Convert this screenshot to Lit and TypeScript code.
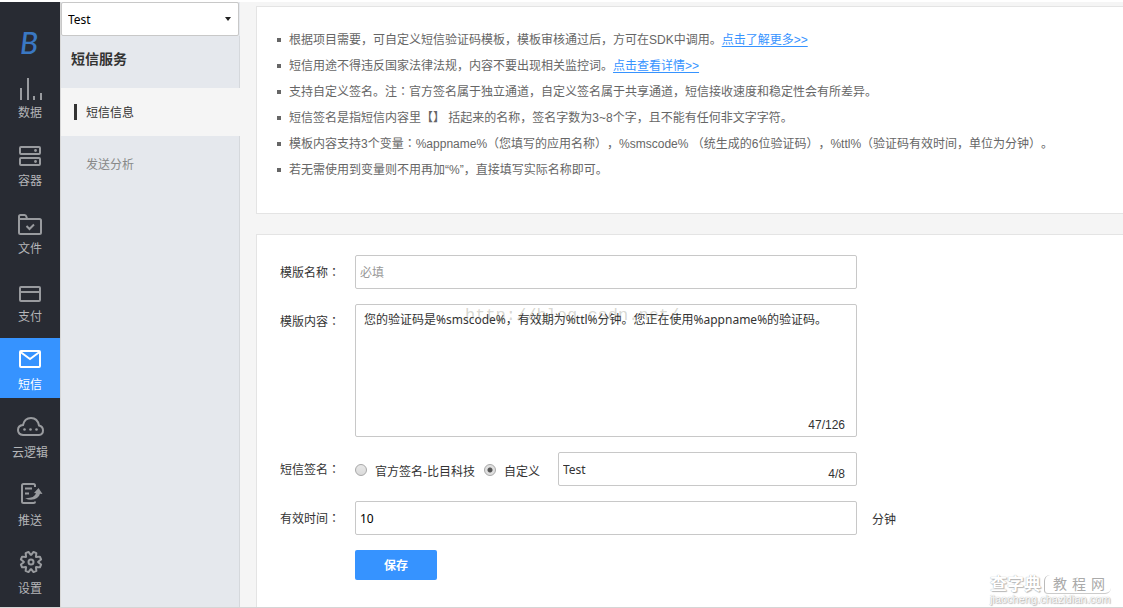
import { LitElement, html, svg, css, TemplateResult } from "lit";
import { customElement, property, state } from "lit/decorators.js";
import { classMap } from "lit/directives/class-map.js";

// Sets full-width colons in the face that centres them in their cell.
const centred = css`
  .mid {
    font-family: "Noto Sans CJK TC", sans-serif;
    line-height: 1;
  }
`;
const punctuate = (text: string) =>
  text.split(/(：)/).map((part) => (part === "：" ? html`<span class="mid">${part}</span>` : part));

const gearPath = (() => {
  const teeth = 8;
  const cx = 31;
  const cy = 20;
  const points: string[] = [];
  for (let i = 0; i < teeth; i++) {
    const mid = (i / teeth) * Math.PI * 2 - Math.PI / 2 + Math.PI / 8;
    const at = (offset: number, r: number) =>
      `${(cx + Math.cos(mid + offset) * r).toFixed(2)} ${(cy + Math.sin(mid + offset) * r).toFixed(2)}`;
    points.push(at(-0.36, 7.2), at(-0.15, 10.4), at(0.15, 10.4), at(0.36, 7.2));
  }
  return `M${points.join("L")}Z`;
})();

const icons: Record<string, TemplateResult> = {
  data: svg`<g fill="currentColor" stroke="none">
    <rect x="20" y="22" width="2" height="12"/><rect x="27" y="12" width="2" height="22"/>
    <rect x="33" y="30" width="2" height="4"/><rect x="40" y="27" width="2" height="7"/></g>`,
  container: svg`<rect x="20" y="13" width="20" height="7" rx="1"/><rect x="20" y="24" width="20" height="7" rx="1"/>
    <g fill="currentColor" stroke="none"><circle cx="35.5" cy="16.5" r="1.4"/><circle cx="35.5" cy="27.5" r="1.4"/></g>`,
  file: svg`<path d="M19 17V14.5Q19 13 20.5 13H24.5Q26 13 26.5 15L27 17H39.500Q41 17 41 18.500V30.500Q41 32 39.500 32H20.500Q19 32 19 30.500V17H27"/>
    <path d="M26.500 24L29.500 27L34 22.500"/>`,
  pay: svg`<rect x="20" y="17" width="20" height="14" rx="1"/><path d="M20 22H40"/>`,
  sms: svg`<rect x="20" y="13" width="20" height="16" rx="1"/><path d="M20.500 14L30 21L39.500 14"/>`,
  cloud: svg`<path d="M23 29Q18 28.500 18 24Q18 19.500 23 19Q24.500 12 31 12Q37.500 12 39 19.500Q43 20.500 43 24.500Q43 28.500 39 29Z"/>
    <g fill="currentColor" stroke="none"><circle cx="24.500" cy="23.500" r="1.300"/><circle cx="30.500" cy="23.500" r="1.300"/><circle cx="36.500" cy="23.500" r="1.300"/></g>`,
  push: svg`<path d="M35 13V11.500Q35 10 33.500 10H23.500Q22 10 22 11.500V27.500Q22 29 23.500 29H33.500Q35 29 35 27.500"/>
    <path d="M25 14.500H32M25 19.500H29"/>
    <path fill="currentColor" stroke="none" d="M38.500 14L42.500 20L40 19.800Q38.500 25.500 31 25.800Q28 25.700 25 24.200Q34.500 24.500 36 19.300L34 19Z"/>`,
  settings: svg`<path stroke-linejoin="round" d=${gearPath}/><circle cx="31" cy="20" r="2.500"/>`,
};

const navItems = [
  { icon: "data", label: "数据" },
  { icon: "container", label: "容器" },
  { icon: "file", label: "文件" },
  { icon: "pay", label: "支付" },
  { icon: "sms", label: "短信" },
  { icon: "cloud", label: "云逻辑" },
  { icon: "push", label: "推送" },
  { icon: "settings", label: "设置" },
];

@customElement("nav-rail")
export class NavRail extends LitElement {
  @property() active = "sms";

  static styles = css`
    :host {
      display: block;
      background: #282b33;
    }
    .logo {
      display: block;
      height: 64px;
      line-height: 80px;
      overflow: hidden;
      text-align: center;
      text-indent: -2px;
      font-family: Lato, sans-serif;
      font-size: 30px;
      font-style: italic;
      font-weight: 500;
      color: #3a78c3;
      text-decoration: none;
    }
    .items {
      display: flex;
      flex-direction: column;
      gap: 8px;
    }
    .item {
      display: flex;
      flex-direction: column;
      align-items: center;
      height: 60px;
      color: #999b9f;
      text-decoration: none;
    }
    .item.active {
      background: #3693ff;
      color: #fff;
    }
    .icon {
      width: 60px;
      height: 36px;
      fill: none;
      stroke: currentColor;
      stroke-width: 2;
    }
    .label {
      font-size: 12px;
      line-height: 22px;
      color: #b4b5b8;
    }
    .active .label {
      color: #fff;
    }
  `;

  render() {
    return html`
      <a class="logo" href="#home">B</a>
      <nav class="items">
        ${navItems.map(
          (item) => html`<a href="#${item.icon}" class=${classMap({ item: true, active: item.icon === this.active })}>
            <svg class="icon" viewBox="0 0 60 36" aria-hidden="true">${icons[item.icon]}</svg>
            <span class="label">${item.label}</span>
          </a>`
        )}
      </nav>
    `;
  }
}

@customElement("service-menu")
export class ServiceMenu extends LitElement {
  static styles = css`
    :host {
      display: flex;
      flex-direction: column;
      background: #e5e8ed;
      border-left: 1px solid #d8d8d8;
    }
    .picker {
      position: relative;
      display: block;
    }
    .select {
      display: block;
      box-sizing: border-box;
      width: 178px;
      height: 34px;
      padding: 0 24px 0 6px;
      appearance: none;
      border: 1px solid #c8c8c8;
      border-radius: 2px;
      background: #fff;
      color: #000;
      font: 12px "Noto Sans", "Noto Sans CJK SC", sans-serif;
    }
    .arrow {
      position: absolute;
      right: 9px;
      top: 15px;
      border: 3px solid transparent;
      border-top: 4px solid #222;
      border-bottom: 0;
      pointer-events: none;
    }
    .title {
      margin: 0;
      padding: 13px 10px 19px;
      font-size: 14px;
      line-height: 20px;
      font-weight: 700;
      color: #333;
      border-right: 1px solid #d5d8dc;
    }
    .entry {
      display: flex;
      align-items: center;
      height: 48px;
      padding: 0 13px;
      gap: 9px;
      font-size: 12px;
      color: #888;
      text-decoration: none;
    }
    .entry::before {
      content: "";
      width: 3px;
      height: 16px;
    }
    .text {
      padding-bottom: 2px;
    }
    .entry.current {
      background: #f5f5f5;
      color: #333;
    }
    .current::before {
      background: #333;
    }
    .rest {
      flex: 1;
      padding-top: 4px;
      border-right: 1px solid #d5d8dc;
    }
  `;

  render() {
    return html`
      <div class="picker">
        <select class="select" aria-label="应用">
          <option>Test</option>
        </select>
        <span class="arrow"></span>
      </div>
      <h1 class="title">短信服务</h1>
      <a class="entry current" href="#info"><span class="text">短信信息</span></a>
      <div class="rest"><a class="entry" href="#analysis"><span class="text">发送分析</span></a></div>
    `;
  }
}

@customElement("template-form")
export class TemplateForm extends LitElement {
  @state() content = "您的验证码是%smscode%，有效期为%ttl%分钟。您正在使用%appname%的验证码。";
  @state() signature = "Test";
  @state() contentCount = 47;

  static styles = [
    centred,
    css`
      :host {
        display: block;
        color: #333;
        font-size: 12px;
      }
      .form {
        display: flex;
        flex-direction: column;
        gap: 15px;
      }
      .row {
        display: grid;
        grid-template-columns: 60px minmax(0, 502px) auto;
        column-gap: 15px;
      }
      .label {
        height: 34px;
        line-height: 36px;
        white-space: nowrap;
      }
      .unit {
        height: 34px;
        line-height: 38px;
      }
      .box {
        position: relative;
        flex: 1;
        min-width: 0;
      }
      .input {
        display: block;
        box-sizing: border-box;
        width: 100%;
        height: 34px;
        margin: 0;
        padding: 0 4px;
        border: 1px solid #c8c8c8;
        border-radius: 2px;
        background: #fff;
        color: #000;
        font: 12px/18px "Noto Sans", "Noto Sans CJK SC", sans-serif;
      }
      .input::placeholder {
        color: #999;
      }
      .area {
        height: 133px;
        padding: 6px 8px;
        color: #333;
        resize: none;
        overflow: hidden;
      }
      .signature {
        color: #333;
      }
      .count {
        position: absolute;
        right: 12px;
        bottom: 4px;
        line-height: 16px;
      }
      .choices {
        display: flex;
        align-items: center;
      }
      .choice {
        display: flex;
        align-items: center;
        gap: 8px;
        box-sizing: border-box;
        height: 34px;
        padding-top: 2px;
        margin-right: 9px;
        white-space: nowrap;
      }
      .choice.last {
        margin-right: 18px;
      }
      .radio {
        appearance: none;
        box-sizing: border-box;
        width: 12px;
        height: 12px;
        margin: 0;
        border: 1px solid #a8a8a8;
        border-radius: 50%;
        background: linear-gradient(#e8e8e8, #dadada);
      }
      .radio:checked {
        background: radial-gradient(circle, #555 0 2px, #e0e0e0 3px);
      }
      .actions {
        display: flex;
        padding-left: 75px;
      }
      .save {
        width: 82px;
        height: 30px;
        padding: 0 0 2px;
        border: 0;
        border-radius: 2px;
        background: #3693ff;
        color: #fff;
        font: 700 12px "Noto Sans CJK SC", sans-serif;
      }
      .stamp {
        position: absolute;
        left: 110px;
        top: 2px;
        line-height: 20px;
        font-family: "Liberation Mono", monospace;
        font-size: 17px;
        color: rgba(120, 120, 100, 0.3);
        pointer-events: none;
      }
    `,
  ];

  private onContent(event: Event) {
    this.content = (event.target as HTMLTextAreaElement).value;
    this.contentCount = this.content.length;
  }

  private onSignature(event: Event) {
    this.signature = (event.target as HTMLInputElement).value;
  }

  render() {
    return html`
      <form class="form">
        <div class="row">
          <label class="label" for="name">${punctuate("模版名称：")}</label>
          <input class="input" id="name" placeholder="必填" />
        </div>
        <div class="row">
          <label class="label" for="content">${punctuate("模版内容：")}</label>
          <div class="box">
            <textarea class="input area" id="content" .value=${this.content} @input=${this.onContent}></textarea>
            <span class="stamp">http://blog.csdn.net/</span>
            <span class="count">${this.contentCount}/126</span>
          </div>
        </div>
        <div class="row">
          <label class="label" for="signature">${punctuate("短信签名：")}</label>
          <div class="choices">
            <label class="choice"><input class="radio" type="radio" name="kind" />官方签名-比目科技</label>
            <label class="choice last"><input class="radio" type="radio" name="kind" checked />自定义</label>
            <div class="box">
              <input class="input signature" id="signature" .value=${this.signature} @input=${this.onSignature} />
              <span class="count">${this.signature.length}/8</span>
            </div>
          </div>
        </div>
        <div class="row">
          <label class="label" for="ttl">${punctuate("有效时间：")}</label>
          <input class="input" id="ttl" value="10" />
          <span class="unit">分钟</span>
        </div>
        <div class="actions"><button class="save" type="button">保存</button></div>
      </form>
    `;
  }
}

@customElement("app-root")
export class AppRoot extends LitElement {
  static styles = [
    centred,
    css`
      :host {
        display: block;
        font-family: "Liberation Sans", "Noto Sans CJK SC", sans-serif;
        text-spacing-trim: space-all;
      }
      .page {
        position: relative;
        box-sizing: border-box;
        display: grid;
        grid-template-columns: 60px 180px minmax(0, 1fr);
        min-height: 100vh;
        padding-top: 2px;
        border-bottom: 1px solid #d5d5d5;
        background: #fff;
        overflow: hidden;
      }
      .main {
        display: flex;
        flex-direction: column;
        gap: 20px;
        padding: 4px 0 0 16px;
        background: #f5f5f5;
      }
      .panel {
        border: 1px solid #e4e4e4;
        border-right: 0;
        background: #fff;
      }
      .notes {
        padding: 20px 16px 30px;
      }
      .editor {
        flex: 1;
        padding: 20px 23px 26px;
        border-bottom: 0;
      }
      .list {
        margin: 0;
        padding: 0 0 0 16px;
        list-style: none;
        font-size: 12px;
        line-height: 26px;
        color: #666;
      }
      .note {
        position: relative;
      }
      .note::before {
        content: "";
        position: absolute;
        left: -12px;
        top: 11px;
        width: 4px;
        height: 4px;
        background: #666;
      }
      .link {
        color: #3693ff;
        text-underline-offset: 2px;
      }
      .mark {
        position: absolute;
        right: 12px;
        bottom: 2px;
        display: flex;
        flex-direction: column;
        color: #fff;
        text-shadow: 0 0 1px #999, 1px 1px 1px #bbb;
        font-size: 11px;
        line-height: 11px;
        pointer-events: none;
      }
      .names {
        display: flex;
        align-items: center;
        gap: 3px;
        font-size: 17px;
        line-height: 18px;
        font-weight: 700;
      }
      .tag {
        display: flex;
        gap: 5px;
        padding: 0 6px 0 8px;
        border-left: 1px solid #bbb;
        border-bottom: 1px solid #ccc;
        border-radius: 6px 0 6px 4px;
        font-size: 14px;
        font-weight: 400;
        color: #aaa;
        text-shadow: none;
      }
    `,
  ];

  render() {
    return html`
      <div class="page">
        <nav-rail active="sms"></nav-rail>
        <service-menu></service-menu>
        <main class="main">
          <section class="panel notes">
            <ul class="list">
              <li class="note">根据项目需要，可自定义短信验证码模板，模板审核通过后，方可在SDK中调用。<a class="link" href="#more">点击了解更多&gt;&gt;</a></li>
              <li class="note">短信用途不得违反国家法律法规，内容不要出现相关监控词。<a class="link" href="#detail">点击查看详情&gt;&gt;</a></li>
              <li class="note">${punctuate("支持自定义签名。注：官方签名属于独立通道，自定义签名属于共享通道，短信接收速度和稳定性会有所差异。")}</li>
              <li class="note">短信签名是指短信内容里【】 括起来的名称，签名字数为3~8个字，且不能有任何非文字字符。</li>
              <li class="note">${punctuate("模板内容支持3个变量：%appname%（您填写的应用名称），%smscode% （统生成的6位验证码），%ttl%（验证码有效时间，单位为分钟）。")}</li>
              <li class="note">若无需使用到变量则不用再加“%”，直接填写实际名称即可。</li>
            </ul>
          </section>
          <section class="panel editor"><template-form></template-form></section>
        </main>
        <div class="mark">
          <div class="names">
            <span>查字典</span>
            <span class="tag"><span>教</span><span>程</span><span>网</span></span>
          </div>
          <span>jiaocheng.chazidian.com</span>
        </div>
      </div>
    `;
  }
}
